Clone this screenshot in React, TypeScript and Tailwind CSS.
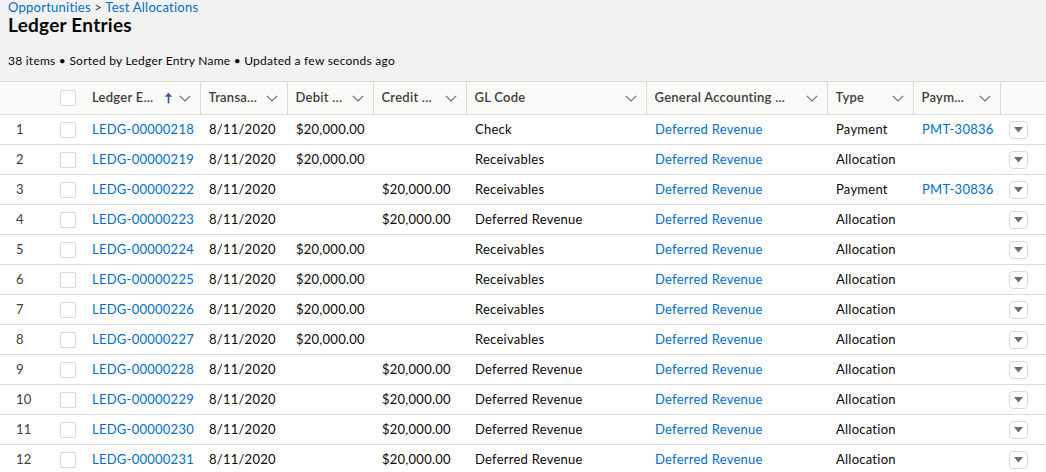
import React from "react";

type Row = {
  n: number;
  id: string;
  debit: string;
  credit: string;
  gl: string;
  type: string;
  pay: string;
};

const rows: Row[] = [
  { n: 1, id: "LEDG-00000218", debit: "$20,000.00", credit: "", gl: "Check", type: "Payment", pay: "PMT-30836" },
  { n: 2, id: "LEDG-00000219", debit: "$20,000.00", credit: "", gl: "Receivables", type: "Allocation", pay: "" },
  { n: 3, id: "LEDG-00000222", debit: "", credit: "$20,000.00", gl: "Receivables", type: "Payment", pay: "PMT-30836" },
  { n: 4, id: "LEDG-00000223", debit: "", credit: "$20,000.00", gl: "Deferred Revenue", type: "Allocation", pay: "" },
  { n: 5, id: "LEDG-00000224", debit: "$20,000.00", credit: "", gl: "Receivables", type: "Allocation", pay: "" },
  { n: 6, id: "LEDG-00000225", debit: "$20,000.00", credit: "", gl: "Receivables", type: "Allocation", pay: "" },
  { n: 7, id: "LEDG-00000226", debit: "$20,000.00", credit: "", gl: "Receivables", type: "Allocation", pay: "" },
  { n: 8, id: "LEDG-00000227", debit: "$20,000.00", credit: "", gl: "Receivables", type: "Allocation", pay: "" },
  { n: 9, id: "LEDG-00000228", debit: "", credit: "$20,000.00", gl: "Deferred Revenue", type: "Allocation", pay: "" },
  { n: 10, id: "LEDG-00000229", debit: "", credit: "$20,000.00", gl: "Deferred Revenue", type: "Allocation", pay: "" },
  { n: 11, id: "LEDG-00000230", debit: "", credit: "$20,000.00", gl: "Deferred Revenue", type: "Allocation", pay: "" },
  { n: 12, id: "LEDG-00000231", debit: "", credit: "$20,000.00", gl: "Deferred Revenue", type: "Allocation", pay: "" },
];

function Chevron() {
  return (
    <svg width="12" height="7" viewBox="0 0 12 7" className="shrink-0">
      <path d="M0.8 0.8 L6 6 L11.2 0.8" fill="none" stroke="#706e6b" strokeWidth="1.2" />
    </svg>
  );
}

function SortArrow() {
  return (
    <svg width="9" height="12" viewBox="0 0 9 12" className="shrink-0">
      <path d="M4.5 11.5 V2" stroke="#3e5a8a" strokeWidth="1.6" fill="none" />
      <path d="M0.8 4.8 L4.5 0.8 L8.2 4.8 Z" fill="#3e5a8a" />
    </svg>
  );
}

function HeadCell({ label, sorted, first }: { label: string; sorted?: boolean; first?: boolean }) {
  return (
    <th className={`h-[33px] p-0 font-semibold text-left ${first ? "" : "border-l border-[#dddbda]"}`}>
      <div className={`flex items-center h-full ${first ? "pl-[10px]" : "pl-2"} pr-[9px]`}>
        <span className="flex-1 whitespace-nowrap overflow-hidden text-[#3e3e3c]">{label}</span>
        {sorted && <span className="mr-[6px] flex items-center"><SortArrow /></span>}
        <Chevron />
      </div>
    </th>
  );
}

function Checkbox() {
  return <div className="w-[16px] h-[16px] bg-white border border-[#dddbda] rounded-[2px]" />;
}

export default function App() {
  return (
    <div
      className="w-[1046px] h-[472px] overflow-hidden bg-[#f3f2f2] text-[13px] text-[#080707] tracking-[0.25px]"
      style={{ fontFamily: "Lato, 'Open Sans', sans-serif" }}
    >
      <div className="px-2 h-[81px]">
        <div className="text-[13px] leading-[15px] text-[#006dcc]">
          Opportunities <span className="text-[#3e3e3c]">&gt;</span> Test Allocations
        </div>
        <h1 className="text-[19px] leading-[20px] font-bold text-[#080707] mt-[0px]">Ledger Entries</h1>
        <div className="text-[12px] leading-[14px] text-[#080707] mt-[19px]">
          38 items • Sorted by Ledger Entry Name • Updated a few seconds ago
        </div>
      </div>
      <table className="w-[1046px] table-fixed border-collapse bg-white">
        <colgroup>
          <col className="w-[50px]" />
          <col className="w-[32px]" />
          <col className="w-[118px]" />
          <col className="w-[87px]" />
          <col className="w-[86px]" />
          <col className="w-[93px]" />
          <col className="w-[180px]" />
          <col className="w-[181px]" />
          <col className="w-[86px]" />
          <col className="w-[87px]" />
          <col className="w-[46px]" />
        </colgroup>
        <thead>
          <tr className="bg-[#fafaf9] border-t border-b border-[#dddbda]">
            <th className="p-0" />
            <th className="p-0">
              <div className="flex items-center justify-start pl-[10px]">
                <Checkbox />
              </div>
            </th>
            <HeadCell label="Ledger E..." sorted first />
            <HeadCell label="Transa..." />
            <HeadCell label="Debit ..." />
            <HeadCell label="Credit ..." />
            <HeadCell label="GL Code" />
            <HeadCell label="General Accounting ..." />
            <HeadCell label="Type" />
            <HeadCell label="Paym..." />
            <th className="p-0 border-l border-[#dddbda]" />
          </tr>
        </thead>
        <tbody>
          {rows.map((r) => (
            <tr key={r.n} className="h-[30px] border-b border-[#dddbda]">
              <td className="p-0 pl-[16px] text-[#3e3e3c]">{r.n}</td>
              <td className="p-0">
                <div className="flex items-center pl-[10px]">
                  <Checkbox />
                </div>
              </td>
              <td className="p-0 pl-[10px] text-[#006dcc] whitespace-nowrap">{r.id}</td>
              <td className="p-0 pl-[9px] whitespace-nowrap">8/11/2020</td>
              <td className="p-0 pl-[9px] whitespace-nowrap">{r.debit}</td>
              <td className="p-0 pl-[9px] whitespace-nowrap">{r.credit}</td>
              <td className="p-0 pl-[9px] whitespace-nowrap">{r.gl}</td>
              <td className="p-0 pl-[9px] whitespace-nowrap text-[#006dcc]">Deferred Revenue</td>
              <td className="p-0 pl-[9px] whitespace-nowrap">{r.type}</td>
              <td className="p-0 pl-[9px] whitespace-nowrap text-[#006dcc]">{r.pay}</td>
              <td className="p-0">
                <div className="flex items-center pl-[9px]">
                  <div className="w-[19px] h-[18px] bg-white border border-[#dddbda] rounded-[4px] flex items-center justify-center">
                    <svg width="9" height="6" viewBox="0 0 9 6">
                      <path d="M0 0 H9 L4.5 5.5 Z" fill="#706e6b" />
                    </svg>
                  </div>
                </div>
              </td>
            </tr>
          ))}
        </tbody>
      </table>
    </div>
  );
}
